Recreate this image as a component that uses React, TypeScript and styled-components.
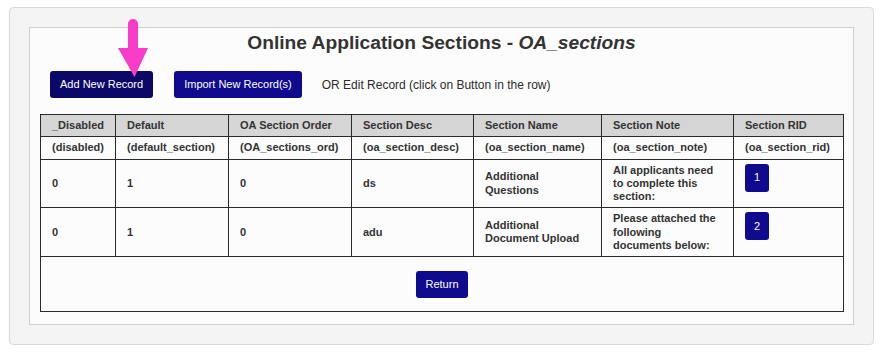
import React from "react";
import styled, { createGlobalStyle } from "styled-components";

const GlobalStyle = createGlobalStyle`
  html, body {
    margin: 0;
    padding: 0;
    background: #ffffff;
    font-family: "Liberation Sans", Arial, sans-serif;
    color: #333333;
  }
`;

const Page = styled.div`
  padding: 7px 8px 9px 9px;
`;

const OuterPanel = styled.div`
  background: #f4f4f4;
  border: 1px solid #dadada;
  border-radius: 4px;
  padding: 19px;
`;

const InnerPanel = styled.div`
  background: #fcfcfc;
  border: 1px solid #cfcfcf;
  padding: 4px 10px 12px;
`;

const Title = styled.h1`
  margin: 0;
  font-size: 19.2px;
  line-height: 22px;
  font-weight: bold;
  text-align: center;
  color: #333333;

  em {
    font-style: italic;
  }
`;

const Toolbar = styled.div`
  position: relative;
  margin-top: 17px;
  padding-left: 10px;
  display: flex;
  align-items: center;
  height: 27px;
`;

const Button = styled.button<{ $dark?: boolean }>`
  height: 27px;
  padding: 0 9px;
  border: none;
  border-radius: 3px;
  background: ${(p) => (p.$dark ? "#0b0868" : "#0f0a8e")};
  color: #ffffff;
  font-family: "Liberation Sans", Arial, sans-serif;
  font-size: 11px;
  line-height: 27px;
  cursor: pointer;
`;

const ToolbarButton = styled(Button)`
  padding: 0 10px;
  margin-right: 21px;
`;

const Hint = styled.span`
  margin-left: -1px;
  font-size: 12px;
  color: #2b2b2b;
`;

const Arrow = styled.svg`
  position: absolute;
  left: 77px;
  top: -52px;
  pointer-events: none;
`;

const Table = styled.table`
  margin-top: 16px;
  width: 100%;
  table-layout: fixed;
  border-collapse: collapse;
  font-size: 11px;
  line-height: 13.3px;
  font-weight: bold;
  color: #333333;
  border: 1px solid #2a2a2a;
`;

const HeadRow = styled.tr`
  background: #d5d5d5;
`;

const Cell = styled.td`
  border: 1px solid #2a2a2a;
  padding: 4px 12px 4px 11px;
  text-align: left;
  vertical-align: middle;
  white-space: normal;
`;

const HeadCell = styled(Cell).attrs({ as: "th" })``;

const RidCell = styled(Cell)`
  vertical-align: top;
  padding-top: 4px;
  padding-bottom: 4px;
`;

const FooterCell = styled.td`
  border: 1px solid #2a2a2a;
  padding: 13.5px 10px;
  text-align: center;
`;

const RidButton = styled(Button)`
  display: block;
  margin-top: 0;
  margin-bottom: 11px;
  height: 28px;
`;

const columns = [
  { label: "_Disabled", field: "(disabled)", width: 75 },
  { label: "Default", field: "(default_section)", width: 113 },
  { label: "OA Section Order", field: "(OA_sections_ord)", width: 123 },
  { label: "Section Desc", field: "(oa_section_desc)", width: 122 },
  { label: "Section Name", field: "(oa_section_name)", width: 128 },
  { label: "Section Note", field: "(oa_section_note)", width: 132 },
  { label: "Section RID", field: "(oa_section_rid)", width: 110 },
];

const rows = [
  {
    disabled: "0",
    def: "1",
    order: "0",
    desc: "ds",
    name: "Additional Questions",
    note: "All applicants need to complete this section:",
    rid: "1",
  },
  {
    disabled: "0",
    def: "1",
    order: "0",
    desc: "adu",
    name: "Additional Document Upload",
    note: "Please attached the following documents below:",
    rid: "2",
  },
];

export default function App() {
  return (
    <>
      <GlobalStyle />
      <Page>
        <OuterPanel>
          <InnerPanel>
            <Title>
              Online Application Sections - <em>OA_sections</em>
            </Title>
            <Toolbar>
              <ToolbarButton $dark>Add New Record</ToolbarButton>
              <ToolbarButton>Import New Record(s)</ToolbarButton>
              <Hint>OR Edit Record (click on Button in the row)</Hint>
              <Arrow width="32" height="60" viewBox="0 0 32 60">
                <rect x="11" y="0" width="10" height="34" rx="5" fill="#f93cc8" />
                <polygon points="1,29 31,29 17.5,58" fill="#f93cc8" />
              </Arrow>
            </Toolbar>
            <Table>
              <colgroup>
                {columns.map((c) => (
                  <col key={c.label} style={{ width: c.width }} />
                ))}
              </colgroup>
              <thead>
                <HeadRow>
                  {columns.map((c) => (
                    <HeadCell key={c.label}>{c.label}</HeadCell>
                  ))}
                </HeadRow>
              </thead>
              <tbody>
                <tr>
                  {columns.map((c) => (
                    <Cell key={c.field}>{c.field}</Cell>
                  ))}
                </tr>
                {rows.map((r) => (
                  <tr key={r.rid}>
                    <Cell>{r.disabled}</Cell>
                    <Cell>{r.def}</Cell>
                    <Cell>{r.order}</Cell>
                    <Cell>{r.desc}</Cell>
                    <Cell>{r.name}</Cell>
                    <Cell>{r.note}</Cell>
                    <RidCell>
                      <RidButton>{r.rid}</RidButton>
                    </RidCell>
                  </tr>
                ))}
                <tr>
                  <FooterCell colSpan={7}>
                    <Button>Return</Button>
                  </FooterCell>
                </tr>
              </tbody>
            </Table>
          </InnerPanel>
        </OuterPanel>
      </Page>
    </>
  );
}
